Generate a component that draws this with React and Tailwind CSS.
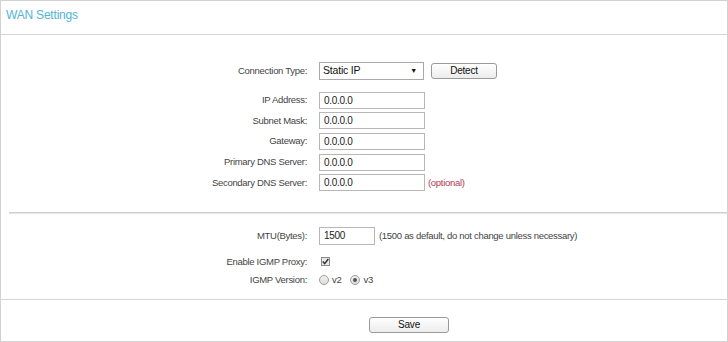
import React from 'react';

const FIELDS = [
  { label: 'IP Address:', value: '0.0.0.0' },
  { label: 'Subnet Mask:', value: '0.0.0.0' },
  { label: 'Gateway:', value: '0.0.0.0' },
  { label: 'Primary DNS Server:', value: '0.0.0.0' },
  { label: 'Secondary DNS Server:', value: '0.0.0.0', note: '(optional)' },
];

function Label({ children }) {
  return <div className="w-[307px] shrink-0 pr-[1px] text-right text-[9.5px] tracking-[-0.3px] text-[#444]">{children}</div>;
}

function Field({ value, width = 'w-[106px]' }) {
  return (
    <div className={`${width} h-[17px] border border-[#b7b7b7] bg-white pl-[4px] text-[10px] leading-[15px] tracking-[-0.3px] text-[#222]`}>
      {value}
    </div>
  );
}

function Button({ children, className = '' }) {
  return (
    <button
      className={`h-[16px] rounded-[3px] border border-[#9a9a9a] bg-gradient-to-b from-white to-[#ececec] text-[10px] leading-[14px] tracking-[-0.2px] text-[#111] ${className}`}
    >
      {children}
    </button>
  );
}

function Radio({ checked }) {
  return (
    <span className="flex h-[10px] w-[10px] items-center justify-center rounded-full border border-[#9c9c9c] bg-gradient-to-b from-[#f2f2f2] to-[#dcdcdc]">
      {checked && <span className="h-[4px] w-[4px] rounded-full bg-[#555]" />}
    </span>
  );
}

export default function App() {
  return (
    <div className="flex h-[342px] w-[728px] flex-col border border-[#d2d2d2] bg-white font-['Liberation_Sans',Arial,sans-serif]">
      {/* Title */}
      <div className="h-[34px] shrink-0 border-b border-[#d6d6d6] pl-[5px] pt-[6px] text-[12px] leading-[16px] tracking-[-0.2px] text-[#53b4d3]">
        WAN Settings
      </div>

      {/* Connection settings */}
      <div className="h-[26px] shrink-0" />
      <div className="flex h-[20px] items-center">
        <Label>Connection Type:</Label>
        <div className="ml-[11px] flex h-[18px] w-[105px] items-center justify-between border border-[#a9a9a9] bg-white pl-[3px] pr-[6px] text-[10.5px] tracking-[-0.2px] text-[#111]">
          <span>Static IP</span>
          <span className="text-[7px]">▼</span>
        </div>
        <Button className="ml-[7px] w-[66px]">Detect</Button>
      </div>
      <div className="h-[9px] shrink-0" />
      {FIELDS.map((f) => (
        <div key={f.label} className="flex h-[20.6px] items-center">
          <Label>{f.label}</Label>
          <div className="ml-[11px]">
            <Field value={f.value} />
          </div>
          {f.note && <span className="ml-[3px] text-[9.5px] tracking-[-0.3px] text-[#b23a5a]">{f.note}</span>}
        </div>
      ))}

      {/* Separator */}
      <div className="mt-[19px] ml-[8px] h-[2px] shrink-0 border-t border-[#cfcfcf] bg-[#e6e6e6]" />

      {/* MTU & IGMP */}
      <div className="mt-[13px] flex h-[18px] items-center">
        <Label>MTU(Bytes):</Label>
        <div className="ml-[11px]">
          <Field value="1500" width="w-[56px] h-[18px]" />
        </div>
        <span className="ml-[4px] text-[9.5px] tracking-[-0.3px] text-[#444]">(1500 as default, do not change unless necessary)</span>
      </div>
      <div className="mt-[8px] flex h-[18px] items-center">
        <Label>Enable IGMP Proxy:</Label>
        <span className="ml-[13px] flex h-[9px] w-[9px] items-center justify-center border border-[#8c8c8c] bg-[#e8e8e8]">
          <svg width="7" height="7" viewBox="0 0 7 7">
            <path d="M0.8 3.6 L2.7 5.6 L6.3 1" fill="none" stroke="#333" strokeWidth="1.5" />
          </svg>
        </span>
      </div>
      <div className="flex h-[19px] items-center text-[9.5px] tracking-[-0.3px] text-[#444]">
        <Label>IGMP Version:</Label>
        <span className="ml-[11px] flex items-center gap-[3px]">
          <Radio />
          <span>v2</span>
        </span>
        <span className="ml-[9px] flex items-center gap-[3px]">
          <Radio checked />
          <span>v3</span>
        </span>
      </div>

      {/* Footer */}
      <div className="mt-[9px] flex flex-1 items-start border-t border-[#d4d4d4] pt-[17px]">
        <Button className="ml-[368px] w-[80px]">Save</Button>
      </div>
    </div>
  );
}
